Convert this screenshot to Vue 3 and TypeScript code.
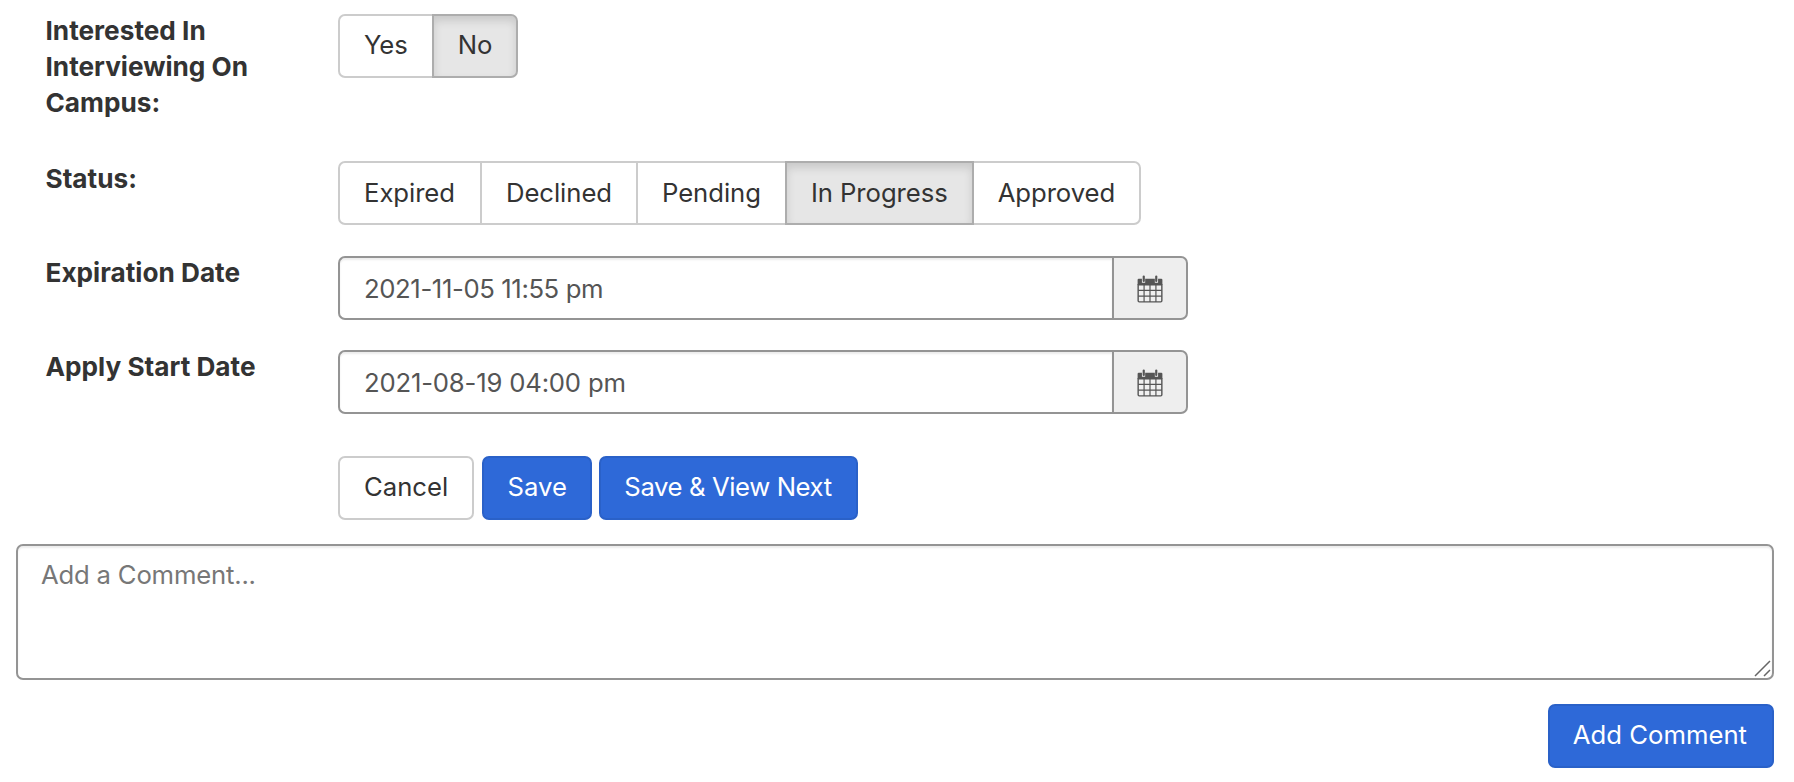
<script setup lang="ts">
const yesNo = [
  { label: 'Yes', active: false },
  { label: 'No', active: true },
]
const statuses = [
  { label: 'Expired', active: false },
  { label: 'Declined', active: false },
  { label: 'Pending', active: false },
  { label: 'In Progress', active: true },
  { label: 'Approved', active: false },
]
const dates = [
  { label: 'Expiration Date', value: '2021-11-05 11:55 pm', tone: 'tight' },
  { label: 'Apply Start Date', value: '2021-08-19 04:00 pm', tone: 'loose' },
]
</script>

<template>
  <div class="page">
    <div class="row row-interest">
      <div class="label">Interested In Interviewing On Campus:</div>
      <div class="group yesno">
        <button v-for="b in yesNo" :key="b.label" class="btn seg" :class="{ active: b.active }">{{ b.label }}</button>
      </div>
    </div>
    <div class="row row-status">
      <div class="label">Status:</div>
      <div class="group status">
        <button v-for="b in statuses" :key="b.label" class="btn seg" :class="{ active: b.active }">{{ b.label }}</button>
      </div>
    </div>
    <div v-for="d in dates" :key="d.label" class="row row-date">
      <div class="label">{{ d.label }}</div>
      <div class="date">
        <input class="date-input" :class="d.tone" type="text" readonly :value="d.value" />
        <span class="addon">
          <svg class="cal" width="26" height="28" viewBox="0 0 24 26" aria-hidden="true">
            <path d="M1.500 3.500h3v3.700h3V3.500h9v3.700h3V3.500h3a1 1 0 0 1 1 1V9H.5V4.500a1 1 0 0 1 1-1z" fill="#555" />
            <rect x="5.200" y="0.500" width="2" height="6" rx="1" fill="#555" />
            <rect x="16.800" y="0.500" width="2" height="6" rx="1" fill="#555" />
            <path d="M1 9h22v15a1 1 0 0 1-1 1H2a1 1 0 0 1-1-1z" fill="#f0f0f0" stroke="#555" stroke-width="1.300" />
            <path d="M6.500 9v16M12 9v16M17.500 9v16M1 14.300h22M1 19.600h22" stroke="#555" stroke-width="1.100" fill="none" />
          </svg>
        </span>
      </div>
    </div>
    <div class="actions">
      <button class="btn plain">Cancel</button>
      <button class="btn primary save">Save</button>
      <button class="btn primary next">Save &amp; View Next</button>
    </div>
    <div class="comment-wrap">
      <textarea class="comment" placeholder="Add a Comment..."></textarea>
      <svg class="grip" width="17" height="17" viewBox="0 0 17 17" aria-hidden="true">
        <path d="M1 16L16 1M10 16l6-6" stroke="#666" stroke-width="1.500" fill="none" />
      </svg>
    </div>
    <div class="comment-actions">
      <button class="btn primary add">Add Comment</button>
    </div>
  </div>
</template>

<style>
html, body { margin: 0; background: #fff; }
</style>

<style scoped>
.page {
  box-sizing: border-box;
  width: 1794px;
  height: 782px;
  overflow: hidden;
  padding: 14px 20px 0 16px;
  font-family: Inter, "Liberation Sans", sans-serif;
  font-size: 25.700px;
  line-height: 36px;
  color: #333;
}
.row {
  display: flex;
  align-items: flex-start;
}
.row-interest { height: 147px; }
.row-status { height: 95px; }
.row-date { height: 94px; }
.label {
  box-sizing: border-box;
  width: 322px;
  padding: 0 40px 0 29.500px;
  font-size: 26.200px;
  font-weight: 700;
  margin-top: -1px;
}
.row-status .label { margin-top: 0; }
.row-date .label { margin-top: -1px; }
.group { display: flex; }
.btn {
  box-sizing: border-box;
  height: 64px;
  padding: 0 24px 2px;
  border: 2px solid #ccc;
  border-radius: 7px;
  background: #fff;
  color: #333;
  font: inherit;
  line-height: 36px;
  white-space: nowrap;
}
.seg {
  border-radius: 0;
  margin-left: -2px;
  letter-spacing: -0.100px;
}
.status .seg {
  padding-bottom: 0;
  letter-spacing: -0.060px;
}
.status .seg:first-child { padding-right: 25px; }
.seg:first-child {
  margin-left: 0;
  border-radius: 7px 0 0 7px;
}
.seg:last-child { border-radius: 0 7px 7px 0; }
.seg.active {
  position: relative;
  background: #e6e6e6;
  border-color: #adadad;
  box-shadow: inset 0 5px 9px rgba(0, 0, 0, 0.125);
}
.date {
  display: flex;
  width: 850px;
  height: 64px;
}
.date-input {
  box-sizing: border-box;
  flex: 1;
  min-width: 0;
  height: 64px;
  padding: 0 24px;
  border: 2px solid #949494;
  border-right: 0;
  border-radius: 7px 0 0 7px;
  outline: none;
  font: inherit;
  color: #555;
  background: #fff;
  box-shadow: inset 0 2px 2px rgba(0, 0, 0, 0.075);
}
.date-input.tight { letter-spacing: -0.390px; }
.date-input.loose { letter-spacing: -0.190px; }
.addon {
  box-sizing: border-box;
  display: flex;
  align-items: center;
  justify-content: center;
  width: 76px;
  height: 64px;
  padding-top: 2px;
  border: 2px solid #949494;
  border-radius: 0 7px 7px 0;
  background: #eee;
}
.cal { margin-right: 1px; }
.actions {
  display: flex;
  gap: 8px;
  padding-left: 322px;
  margin-top: 12px;
}
.primary {
  background: #2e69d8;
  border-color: #2a61c8;
  color: #fff;
}
.save { padding: 0 23.300px 2px; }
.next {
  margin-left: -1.500px;
  padding-left: 23.500px;
  letter-spacing: -0.400px;
}
.comment-wrap {
  position: relative;
  margin-top: 24px;
}
.comment {
  display: block;
  box-sizing: border-box;
  width: 100%;
  height: 136px;
  padding: 11px 23px;
  border: 2px solid #949494;
  border-radius: 7px;
  outline: none;
  resize: none;
  font: inherit;
  letter-spacing: -0.200px;
  color: #555;
  background: #fff;
  box-shadow: inset 0 2px 2px rgba(0, 0, 0, 0.075);
}
.comment::placeholder { color: #777; opacity: 1; }
.grip {
  position: absolute;
  right: 3px;
  bottom: 3px;
}
.comment-actions {
  display: flex;
  justify-content: flex-end;
  margin-top: 24px;
}
.add { padding-left: 23px; padding-right: 25px; }
</style>
